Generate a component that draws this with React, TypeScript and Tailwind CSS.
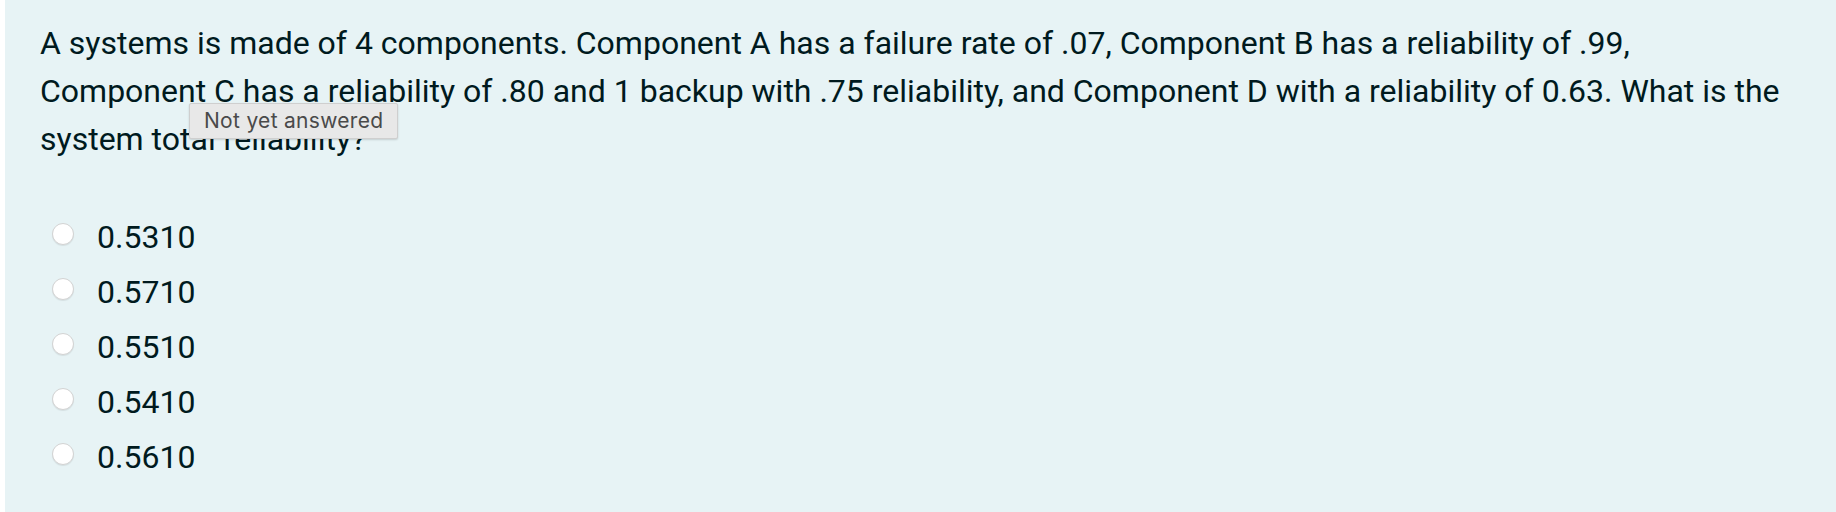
import React from 'react'

const options = ['0.5310', '0.5710', '0.5510', '0.5410', '0.5610']

const App: React.FC = () => {
    return (
        <div className="min-h-[512px] bg-white pl-[5px]" style={{ fontFamily: 'Roboto, "Liberation Sans", sans-serif' }}>
            <div className="relative min-h-[512px] bg-[#e7f3f5] text-[#001a1e] pl-[35px] pr-[35px] pt-[19px]">
                {/* Question text */}
                <p className="text-[32px] leading-[48px] whitespace-nowrap">
                    A systems is made of 4 components. Component A has a failure rate of .07, Component B has a reliability of .99,<br />
                    Component C has a reliability of .80 and 1 backup with .75 reliability, and Component D with a reliability of 0.63. What is the<br />
                    system total reliability?
                </p>

                {/* Answers */}
                <div className="mt-[47px] flex flex-col">
                    {options.map(opt => (
                        <label key={opt} className="flex items-start h-[55px] text-[32px] leading-[55px]">
                            <span className="ml-[12px] mt-[13px] w-[22px] h-[22px] shrink-0 rounded-full bg-white border border-[#d3d3d3] shadow-[0_1px_1px_rgba(0,0,0,0.08)]"></span>
                            <span className="ml-[23px]">{opt}</span>
                        </label>
                    ))}
                </div>

                {/* Tooltip */}
                <div
                    className="absolute left-[184px] top-[103px] h-[36px] px-[14px] flex items-center bg-[#e8e8e8] border border-[#cfcfcf] rounded-[2px] shadow-[0_1px_2px_rgba(0,0,0,0.15)] text-[21px] tracking-[0.3px] text-[#4a4a4a]"
                    style={{ fontFamily: 'Inter, "Liberation Sans", sans-serif' }}
                >
                    Not yet answered
                </div>
            </div>
        </div>
    )
}

export default App
